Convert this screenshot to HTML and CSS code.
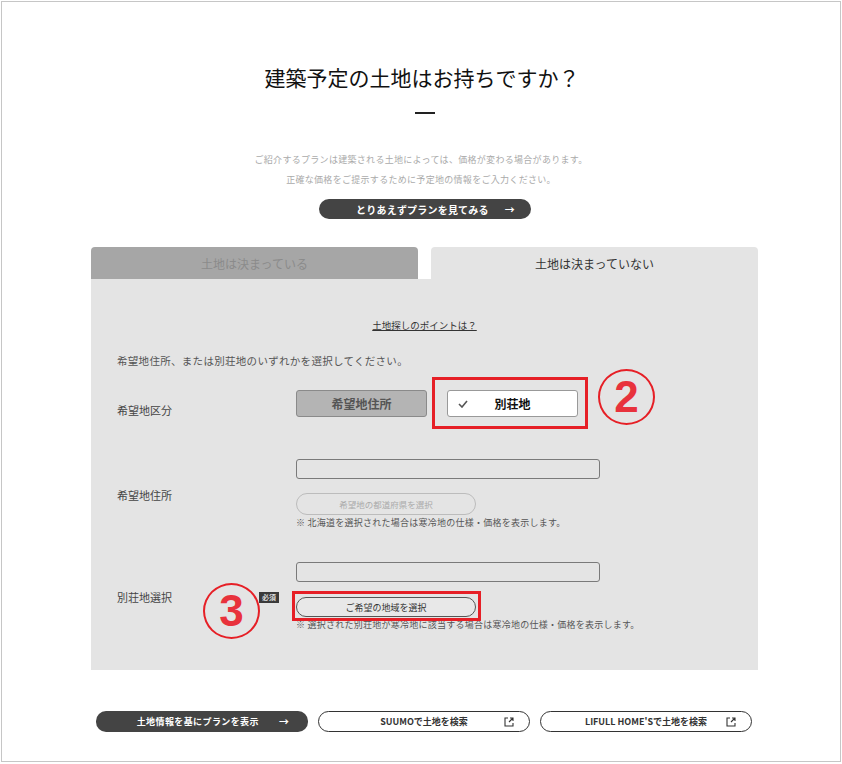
FILE: index.html
```html
<!DOCTYPE html>
<html lang="ja">
<head>
    <meta charset="UTF-8">
    <meta name="viewport" content="width=device-width, initial-scale=1.0">
    <title>建築予定の土地はお持ちですか？</title>
    <link rel="stylesheet" href="styles.css">
</head>
<body>
    <div class="page">
        <div class="intro">
            <h1 class="title">建築予定の土地はお持ちですか？</h1>
            <div class="dash"></div>
            <p class="lead">ご紹介するプランは建築される土地によっては、価格が変わる場合があります。<br>正確な価格をご提示するために予定地の情報をご入力ください。</p>
        </div>

        <div class="wrap">
            <div class="skip-row">
                <a class="btn-dark btn-skip" href="#">とりあえずプランを見てみる<span class="arrow">→</span></a>
            </div>

            <div class="tabs">
                <div class="tab tab-off">土地は決まっている</div>
                <div class="tab tab-on">土地は決まっていない</div>
            </div>

            <div class="panel">
                <p class="hint"><a href="#">土地探しのポイントは？</a></p>
                <p class="guide">希望地住所、または別荘地のいずれかを選択してください。</p>

                <div class="row row-kind">
                    <div class="label">希望地区分</div>
                    <div class="field field-kind">
                        <button class="kind kind-off">希望地住所</button>
                        <button class="kind kind-on">
                            <svg class="check" width="10" height="8" viewBox="0 0 10 8"><polyline points="1,4 4,7 9,1" fill="none" stroke="#555" stroke-width="1.6"/></svg>
                            別荘地
                            <span class="mark mark-kind"></span>
                        </button>
                    </div>
                </div>

                <div class="row">
                    <div class="label">希望地住所</div>
                    <div class="field">
                        <div class="input"></div>
                        <button class="pill pill-off">希望地の都道府県を選択</button>
                        <p class="note">※ 北海道を選択された場合は寒冷地の仕様・価格を表示します。</p>
                    </div>
                </div>

                <div class="row">
                    <div class="label">別荘地選択<span class="badge">必須</span></div>
                    <div class="field">
                        <div class="input"></div>
                        <button class="pill pill-on">ご希望の地域を選択<span class="mark mark-area"></span></button>
                        <p class="note">※ 選択された別荘地が寒冷地に該当する場合は寒冷地の仕様・価格を表示します。</p>
                    </div>
                </div>
            </div>

            <div class="actions">
                <a class="btn-dark btn-action" href="#">土地情報を基にプランを表示<span class="arrow">→</span></a>
                <a class="btn-line btn-action" href="#">SUUMOで土地を検索
                    <svg class="ext" width="10" height="10" viewBox="0 0 10 10"><path d="M4 1H1v8h8V6M6 1h3v3M9 1L5 5" fill="none" stroke="#333" stroke-width="1.1"/></svg>
                </a>
                <a class="btn-line btn-action" href="#">LIFULL HOME'Sで土地を検索
                    <svg class="ext" width="10" height="10" viewBox="0 0 10 10"><path d="M4 1H1v8h8V6M6 1h3v3M9 1L5 5" fill="none" stroke="#333" stroke-width="1.1"/></svg>
                </a>
            </div>
        </div>

        <div class="step step-2">2</div>
        <div class="step step-3">3</div>
    </div>
</body>
</html>
```

FILE: styles.css
```css
body {
    margin: 0;
    background-color: #fff;
    font-family: "Noto Sans CJK JP", "Noto Sans", sans-serif;
    color: #333;
}
p {
    margin: 0;
}
a {
    color: inherit;
    text-decoration: none;
}
button {
    font-family: inherit;
    cursor: pointer;
}
.page {
    position: relative;
    box-sizing: border-box;
    width: 840px;
    height: 761px;
    margin: 1px 0 0 1px;
    border: 1px solid #c6c6c6;
}
.intro {
    padding-top: 60px;
    text-align: center;
}
.title {
    margin: 0;
    font-size: 21px;
    line-height: 30px;
    font-weight: 400;
    color: #111;
    padding-left: 2px;
}
.dash {
    width: 20px;
    height: 2px;
    margin: 20px 0 0 413px;
    background-color: #222;
}
.lead {
    margin-top: 36px;
    font-size: 9px;
    line-height: 20px;
    letter-spacing: 0.3px;
    color: #aaa;
}
.wrap {
    width: 667px;
    margin-left: 89px;
}
.skip-row {
    display: flex;
    justify-content: center;
    margin-top: 9px;
}
.btn-dark {
    display: flex;
    align-items: center;
    justify-content: center;
    box-sizing: border-box;
    height: 20px;
    border-radius: 10px;
    background-color: #444;
    color: #fff;
    font-weight: 700;
}
.btn-skip {
    width: 212px;
    font-size: 10px;
    letter-spacing: 0.2px;
    padding-left: 22px;
}
.arrow {
    margin-left: 16px;
    font-size: 10px;
}
.tabs {
    display: flex;
    gap: 13px;
    margin-top: 28px;
}
.tab {
    flex: 1;
    height: 32px;
    line-height: 34px;
    text-align: center;
    font-size: 12px;
    border-radius: 4px 4px 0 0;
}
.tab-off {
    background-color: #a6a6a6;
    color: #8b8b8b;
}
.tab-on {
    background-color: #e4e4e4;
    color: #333;
}
.panel {
    box-sizing: border-box;
    height: 391px;
    padding: 39px 0 0 26px;
    background-color: #e4e4e4;
}
.hint {
    padding-right: 26px;
    text-align: center;
    font-size: 9.5px;
    line-height: 14px;
}
.hint a {
    color: #333;
    text-decoration: underline;
}
.guide {
    margin-top: 21px;
    font-size: 10.5px;
    line-height: 16px;
    letter-spacing: 0.3px;
    color: #555;
}
.row {
    display: flex;
    align-items: center;
    margin-top: 32px;
}
.row-kind {
    margin-top: 21px;
    align-items: flex-start;
}
.row-kind + .row {
    margin-top: 41px;
}
.label {
    display: flex;
    align-items: center;
    justify-content: space-between;
    box-sizing: border-box;
    width: 179px;
    padding-right: 17px;
    font-size: 11px;
    color: #444;
}
.row-kind .label {
    padding-top: 12px;
}
.badge {
    padding: 0 3px;
    height: 11px;
    line-height: 11px;
    font-size: 7px;
    font-weight: 700;
    color: #ddd;
    background-color: #3a3a3a;
}
.field-kind {
    display: flex;
    gap: 20px;
}
.kind {
    position: relative;
    box-sizing: border-box;
    width: 131px;
    height: 27px;
    border-radius: 3px;
    font-size: 12px;
    font-weight: 700;
    padding: 0;
}
.kind-off {
    background-color: #b4b4b4;
    border: 1px solid #8a8a8a;
    color: #555;
}
.kind-on {
    background-color: #fff;
    border: 1px solid #999;
    color: #111;
}
.check {
    position: absolute;
    left: 10px;
    top: 9px;
}
.input {
    box-sizing: border-box;
    width: 304px;
    height: 20px;
    border: 1px solid #7a7a7a;
    border-radius: 3px;
}
.pill {
    position: relative;
    display: block;
    box-sizing: border-box;
    width: 180px;
    margin-top: 14px;
    border-radius: 11px;
    font-size: 8.5px;
    padding: 0;
    background-color: transparent;
}
.pill-off {
    height: 22px;
    border: 1px solid #bcbcbc;
    color: #aaa;
}
.pill-on {
    height: 20px;
    margin-top: 15px;
    border: 1px solid #555;
    color: #333;
    font-size: 9px;
    background-color: #e8e8e8;
}
.note {
    margin-top: 1px;
    font-size: 9px;
    line-height: 14px;
    letter-spacing: 0.25px;
    color: #555;
}
.mark {
    position: absolute;
    box-sizing: border-box;
    border: 3px solid #e61f26;
}
.mark-kind {
    left: -16px;
    top: -14px;
    width: 156px;
    height: 52px;
}
.mark-area {
    left: -5px;
    top: -7px;
    width: 189px;
    height: 30px;
}
.actions {
    display: flex;
    gap: 10px;
    margin: 41px 0 0 5px;
}
.btn-action {
    width: 212px;
    height: 21px;
    font-size: 9px;
    font-weight: 700;
}
.btn-line {
    position: relative;
    display: flex;
    align-items: center;
    justify-content: center;
    box-sizing: border-box;
    border: 1px solid #333;
    border-radius: 11px;
    color: #333;
}
.ext {
    position: absolute;
    right: 15px;
    top: 5px;
}
.btn-dark.btn-action {
    padding-left: 22px;
    letter-spacing: 0.4px;
}
.btn-dark.btn-action .arrow {
    margin-left: 20px;
}
.step {
    position: absolute;
    box-sizing: border-box;
    width: 57px;
    height: 56px;
    border: 2px solid #e61f26;
    border-radius: 50%;
    text-align: center;
    font-size: 44px;
    line-height: 51px;
    font-weight: 700;
    color: #e8323c;
    font-family: "Liberation Sans", sans-serif;
}
.step-2 {
    left: 596px;
    top: 367px;
}
.step-3 {
    left: 201px;
    top: 581px;
}
```
